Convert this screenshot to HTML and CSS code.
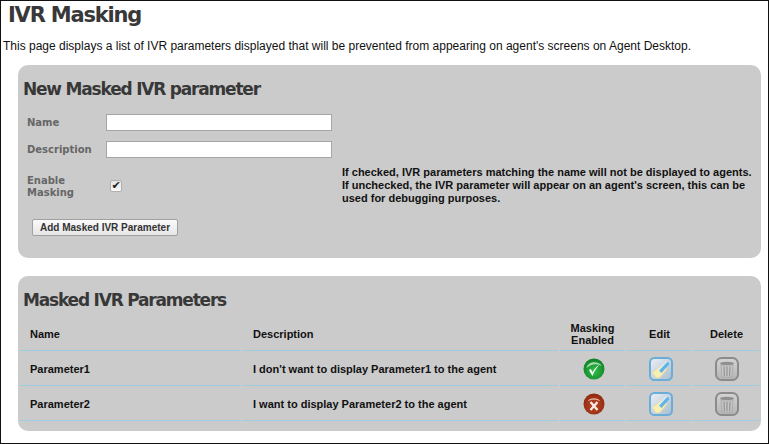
FILE: index.html
```html
<!DOCTYPE html>
<html lang="en">
<head>
  <meta charset="UTF-8" />
  <title>IVR Masking</title>
  <link rel="stylesheet" href="styles.css">
</head>
<body>
  <svg class="icon-defs">
    <defs>
      <radialGradient id="greenBall" cx="50%" cy="60%" r="60%">
        <stop offset="0" stop-color="#35c04a"/>
        <stop offset="1" stop-color="#0d7f25"/>
      </radialGradient>
      <radialGradient id="redBall" cx="50%" cy="60%" r="60%">
        <stop offset="0" stop-color="#bd4522"/>
        <stop offset="1" stop-color="#8e2a10"/>
      </radialGradient>
      <linearGradient id="editBack" x1="0" y1="0" x2="1" y2="1">
        <stop offset="0" stop-color="#eef0f6"/>
        <stop offset="1" stop-color="#a9bccd"/>
      </linearGradient>
      <linearGradient id="trashBack" x1="0" y1="0" x2="0" y2="1">
        <stop offset="0" stop-color="#d4d4d4"/>
        <stop offset="1" stop-color="#b4b4b4"/>
      </linearGradient>
      <symbol id="icon-yes" viewBox="0 0 22 22">
        <circle cx="11" cy="11" r="10.5" fill="url(#greenBall)"/>
        <path d="M3.5 10C5 3 16 2.500 19 8.500 15 5 8 5.500 3.500 10z" fill="#c8ecca" opacity=".8"/>
        <path d="M6 12l3.500 6c1.500-4.500 3.800-8 7-11.500-3.500 2.200-5.500 5-7 7.800L7.800 11z" fill="#fff"/>
      </symbol>
      <symbol id="icon-no" viewBox="0 0 22 22">
        <circle cx="11" cy="11" r="10.500" fill="url(#redBall)"/>
        <path d="M4.500 8.500C6 4 16 4 17.500 8.500 14 6 8 6 4.500 8.500z" fill="#f0c8b8" opacity=".85"/>
        <path d="M7.500 9l7 8M14.500 9l-7 8" fill="none" stroke="#f6ece8" stroke-width="2.300"/>
      </symbol>
      <symbol id="icon-edit" viewBox="0 0 24 24">
        <rect x="1" y="1" width="22" height="22" rx="4.500" fill="url(#editBack)" stroke="#69aed8" stroke-width="2"/>
        <path d="M3 15.500L13 8l5 4-7 8.500-4 .5z" fill="#f7eeb4" stroke="#e2d28c" stroke-width=".5"/>
        <path d="M10 13.500L18.500 4.500l2 2.500-8 9z" fill="#62b4e6"/>
        <path d="M9 12.500L17 4l1.500.5-8.500 9z" fill="#d8ecf8"/>
      </symbol>
      <symbol id="icon-trash" viewBox="0 0 24 24">
        <rect x="1" y="1" width="22" height="22" rx="5.500" fill="url(#trashBack)" stroke="#8b8b8b" stroke-width="2"/>
        <ellipse cx="12" cy="6.500" rx="7" ry="1.800" fill="#8f8f8f"/>
        <path d="M6 8h12l-1 12H7z" fill="#c6c6c6" stroke="#9a9a9a" stroke-width=".6"/>
        <path d="M9 9.500l.4 9.500M12 9.500V19M15 9.500l-.4 9.500" stroke="#909090" stroke-width="1.100" fill="none"/>
      </symbol>
    </defs>
  </svg>

  <div class="page">
    <h1>IVR Masking</h1>
    <p class="intro">This page displays a list of IVR parameters displayed that will be prevented from appearing on agent's screens on Agent Desktop.</p>

    <div class="panel new-panel">
      <h2>New Masked IVR parameter</h2>
      <div class="form-row first-row">
        <label>Name</label>
        <input type="text" />
      </div>
      <div class="form-row">
        <label>Description</label>
        <input type="text" />
      </div>
      <div class="form-row check-row">
        <label>Enable Masking</label>
        <input class="check" type="checkbox" checked />
        <p class="hint">If checked, IVR parameters matching the name will not be displayed to agents.<br>If unchecked, the IVR parameter will appear on an agent's screen, this can be<br>used for debugging purposes.</p>
      </div>
      <button class="add-btn">Add Masked IVR Parameter</button>
    </div>

    <div class="panel list-panel">
      <h2>Masked IVR Parameters</h2>
      <table>
        <thead>
          <tr>
            <th class="col-name">Name</th>
            <th class="col-desc">Description</th>
            <th class="col-mid">Masking<br>Enabled</th>
            <th class="col-mid">Edit</th>
            <th class="col-mid">Delete</th>
          </tr>
        </thead>
        <tbody>
          <tr>
            <td>Parameter1</td>
            <td>I don't want to display Parameter1 to the agent</td>
            <td class="icon-cell status-cell"><svg class="status"><use href="#icon-yes"/></svg></td>
            <td class="icon-cell edit-cell"><svg class="action"><use href="#icon-edit"/></svg></td>
            <td class="icon-cell"><svg class="action"><use href="#icon-trash"/></svg></td>
          </tr>
          <tr>
            <td>Parameter2</td>
            <td>I want to display Parameter2 to the agent</td>
            <td class="icon-cell status-cell"><svg class="status"><use href="#icon-no"/></svg></td>
            <td class="icon-cell edit-cell"><svg class="action"><use href="#icon-edit"/></svg></td>
            <td class="icon-cell"><svg class="action"><use href="#icon-trash"/></svg></td>
          </tr>
        </tbody>
      </table>
    </div>
  </div>
</body>
</html>
```

FILE: styles.css
```css
* {margin: 0; padding: 0; box-sizing: border-box;}
body {
  background: #fff;
  color: #111;
  font-family: "Liberation Sans", Arial, sans-serif;
}
.icon-defs {
  display: block;
  width: 0;
  height: 0;
}
.page {
  height: 444px;
  border: 1px solid #111;
  padding: 0 7px 0 2px;
  overflow: hidden;
}
h1, h2 {
  font-family: "DejaVu Sans", Verdana, sans-serif;
  font-weight: bold;
  color: #383838;
}
h1 {
  font-size: 21px;
  line-height: 28px;
  letter-spacing: -1.2px;
  margin-left: 5px;
}
h2 {
  font-size: 17px;
  line-height: 22px;
  letter-spacing: -1.2px;
  margin-left: 5px;
}
.intro {
  font-size: 12px;
  line-height: 14px;
  margin-top: 10px;
}
.panel {
  background: #cbcbcb;
  border-radius: 10px;
  margin-left: 15px;
  padding-top: 13px;
}
.new-panel {
  height: 193px;
  margin-top: 12px;
}
.list-panel {
  height: 155px;
  margin-top: 18px;
}
.form-row {
  display: flex;
  align-items: center;
  margin: 10px 0 0 9px;
}
.first-row {
  margin-top: 14px;
}
.form-row label {
  width: 79px;
  font-family: "DejaVu Sans", Verdana, sans-serif;
  font-size: 10px;
  font-weight: bold;
  line-height: 12px;
  color: #666;
}
.form-row input[type=text] {
  width: 226px;
  height: 17px;
  border: 1px solid #a5a5a5;
  background: #fff;
}
.check-row {
  margin-top: 8px;
}
.check-row label {
  width: 60px;
  padding-top: 2px;
}
.check {
  appearance: none;
  display: flex;
  align-items: center;
  justify-content: center;
  width: 12px;
  height: 12px;
  margin-left: 23px;
  border: 1px solid #b0b0b0;
  border-radius: 2px;
  background: linear-gradient(#e4e4e4, #f8f8f8);
}
.check::after {
  content: "✔";
  font-family: "DejaVu Sans", sans-serif;
  font-size: 11px;
  line-height: 10px;
  color: #222;
}
.hint {
  margin-left: 220px;
  font-size: 11px;
  font-weight: bold;
  line-height: 13px;
  white-space: nowrap;
}
.add-btn {
  display: block;
  width: 146px;
  height: 17px;
  margin: 14px 0 0 14px;
  font-family: inherit;
  font-size: 10px;
  font-weight: bold;
  color: #333;
  background: linear-gradient(#fafafa, #e6e6e6);
  border: 1px solid #a0a0a0;
  border-radius: 2px;
}
table {
  width: 100%;
  border-collapse: separate;
  border-spacing: 2px 0;
  margin-top: 3px;
  font-size: 11px;
  font-weight: bold;
}
th, td {
  padding: 2px 0 0 10px;
  border-bottom: 1px solid #9fcbe2;
  text-align: left;
}
th {
  height: 37px;
  line-height: 12px;
  padding-top: 3px;
}
td {
  height: 35px;
}
.col-name {width: 221px;}
.col-desc {width: 315px;}
th.col-mid {width: 65px; text-align: center; padding-left: 0;}
td.icon-cell {text-align: center; padding: 2px 0 0;}
td.status-cell {padding-left: 3px;}
td.edit-cell {padding-left: 2px;}
.status {width: 22px; height: 22px; vertical-align: middle;}
.action {width: 24px; height: 24px; vertical-align: middle;}
```
